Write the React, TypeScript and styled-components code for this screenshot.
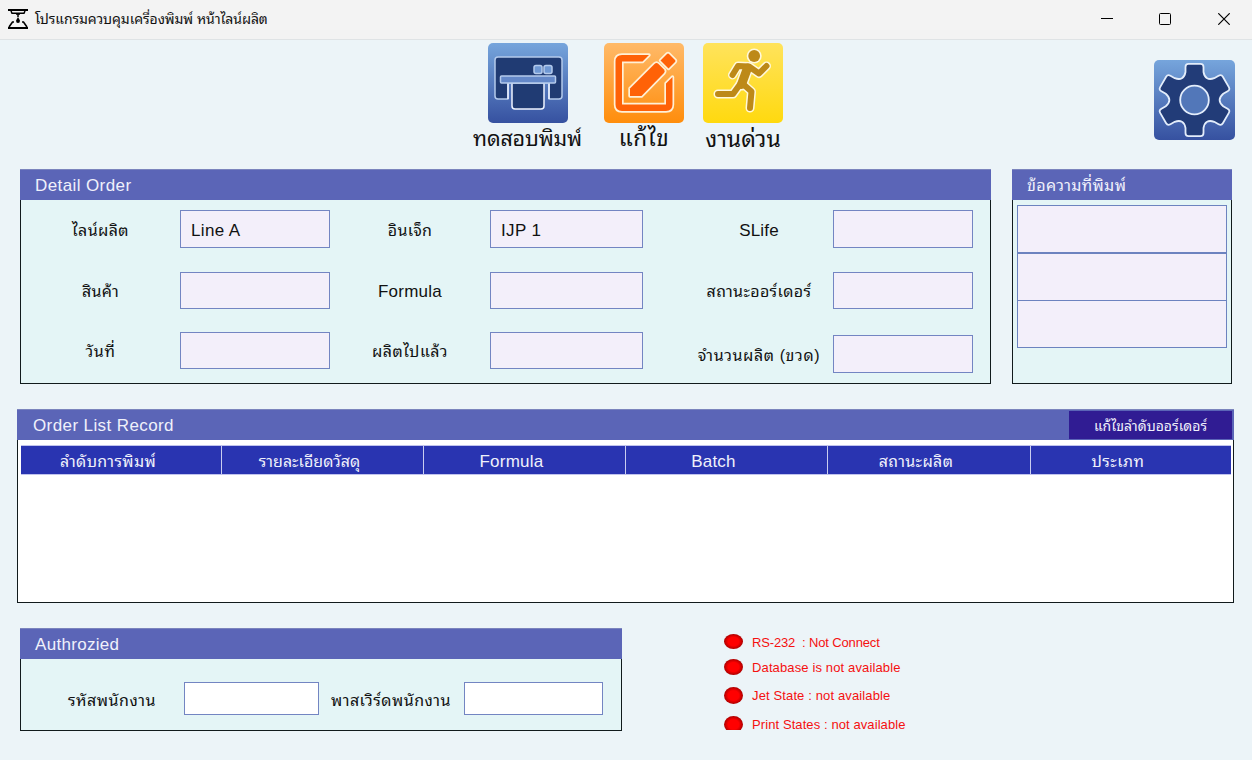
import React from "react";
import styled, { createGlobalStyle } from "styled-components";

const Global = createGlobalStyle`
  * { box-sizing: border-box; }
  body { margin: 0; background: #ecf4f8; font-family: "Liberation Sans", "Noto Sans Thai Looped", "Loma", "Noto Sans Thai", sans-serif; }
`;

const Window = styled.div`
  width: 1252px;
  height: 760px;
  background: #ecf4f8;
  overflow: hidden;
  display: flex;
  flex-direction: column;
`;

const TitleBar = styled.header`
  height: 40px;
  flex: none;
  background: #f3f3f3;
  border-bottom: 1px solid #dfe3e5;
  display: flex;
  align-items: center;
  justify-content: space-between;
  padding: 0 22px 2px 8px;
`;

const TitleGroup = styled.div`
  display: flex;
  align-items: center;
  gap: 7px;
`;

const Controls = styled.div`
  display: flex;
  align-items: center;
  gap: 46px;
  svg:last-child { margin-left: 1px; }
`;

const Text = styled.span<{ $size?: number; $track?: number; $color?: string }>`
  display: inline-block;
  white-space: pre;
  line-height: 20px;
  font-size: ${(p) => p.$size ?? 16}px;
  letter-spacing: ${(p) => p.$track ?? 0}px;
  color: ${(p) => p.$color ?? "#111"};
`;

const Toolbar = styled.nav`
  height: 129px;
  flex: none;
  display: flex;
  align-items: flex-start;
  padding: 3px 17px 0 473px;
`;

const Tool = styled.button<{ $width: number; $gap?: number }>`
  width: ${(p) => p.$width}px;
  margin-left: ${(p) => p.$gap ?? 0}px;
  padding: 0;
  border: 0;
  background: none;
  font-family: inherit;
  display: flex;
  flex-direction: column;
  align-items: center;
  gap: 6px;
  svg { display: block; flex: none; }
`;

const SettingsButton = styled.button`
  margin: 17px 0 0 auto;
  padding: 0;
  border: 0;
  background: none;
  svg { display: block; }
`;

const PanelRow = styled.div<{ $top?: number }>`
  display: flex;
  margin: ${(p) => p.$top ?? 0}px 20px 0;
`;

const Panel = styled.section<{ $width: number; $height: number; $left?: number; $bg?: string }>`
  width: ${(p) => p.$width}px;
  height: ${(p) => p.$height}px;
  margin-left: ${(p) => p.$left ?? 0}px;
  flex: none;
  display: flex;
  flex-direction: column;
  background: ${(p) => p.$bg ?? "#e4f5f6"};
`;

const PanelHeader = styled.h2<{ $indent?: number }>`
  margin: 0;
  height: 31px;
  flex: none;
  padding: 1px 2px 0 ${(p) => p.$indent ?? 15}px;
  background: #5b65b7;
  border-top: 1px solid #7b84bd;
  font-weight: 400;
  display: flex;
  align-items: center;
  justify-content: space-between;
`;

const PanelBody = styled.div<{ $pad?: string }>`
  flex: 1;
  min-height: 0;
  border: 1px solid #111a1c;
  border-top: 0;
  display: flex;
  padding: ${(p) => p.$pad ?? "0"};
`;

const FieldColumn = styled.div<{ $width: number; $left?: number }>`
  width: ${(p) => p.$width}px;
  margin-left: ${(p) => p.$left ?? 0}px;
  padding-top: 10px;
  display: flex;
  flex-direction: column;
`;

const Field = styled.label<{ $gap?: number }>`
  display: flex;
  align-items: center;
  margin-top: ${(p) => p.$gap ?? 0}px;
`;

const FieldLabel = styled.span`
  flex: 1;
  display: flex;
  justify-content: center;
  padding-top: 3px;
`;

const Box = styled.span<{ $width: number; $height?: number; $fill?: string }>`
  width: ${(p) => p.$width}px;
  height: ${(p) => p.$height ?? 38}px;
  flex: none;
  border: 1px solid #7385c2;
  background: ${(p) => p.$fill ?? "#f3effa"};
  display: flex;
  align-items: center;
  padding: 3px 0 0 10px;
`;

const MessageList = styled.div`
  flex: 1;
  display: flex;
  flex-direction: column;
`;

const MessageRow = styled.div`
  height: 48px;
  border: 1px solid #6c83bf;
  background: #f3effa;
  & + & { margin-top: -0.5px; }
`;

const EditOrderButton = styled.button`
  width: 163px;
  height: 28px;
  margin-bottom: 2px;
  border: 0;
  padding: 2px 0 0;
  background: #301c93;
  font-family: inherit;
`;

const TableHead = styled.div`
  width: 1210px;
  height: 30px;
  display: grid;
  grid-template-columns: 200px 202px 202px 202px 203px 201px;
  background: #2934b1;
  border-top: 1px solid #c0c3ed;
  border-bottom: 1px solid #c0c3ed;
`;

const HeadCell = styled.div`
  display: flex;
  align-items: center;
  justify-content: center;
  padding: 3px 26px 0 0;
  & + & { border-left: 1px solid #c9cdf0; }
`;

const CredentialRow = styled.div`
  display: flex;
  height: 33px;
  align-items: center;
`;

const CredentialLabel = styled.span<{ $width: number; $pad: number }>`
  width: ${(p) => p.$width}px;
  padding: 4px 0 0 ${(p) => p.$pad}px;
  display: flex;
`;

const StatusList = styled.ul`
  list-style: none;
  margin: 0 0 0 102px;
  padding: 6px 0 0;
  display: flex;
  flex-direction: column;
`;

const StatusItem = styled.li<{ $height: number }>`
  height: ${(p) => p.$height}px;
  flex: none;
  display: flex;
  align-items: flex-start;
  gap: 9px;
  ${Text} { line-height: 17px; }
`;

const Lamp = styled.i<{ $size: number; $cut?: number }>`
  width: 19px;
  height: ${(p) => p.$size}px;
  flex: none;
  border-radius: 50%;
  background: radial-gradient(ellipse at center, #ff0000 40%, #a80000 72%);
  clip-path: inset(0 0 ${(p) => p.$cut ?? 0}px 0);
`;

const PrinterMark = () => (
  <svg width="20" height="20" viewBox="0 0 20 20" fill="none" stroke="#000" strokeWidth="2">
    <path d="M0 1H20" />
    <path d="M3 2L4 4.2H16L17 2" strokeWidth="1.5" />
    <path d="M8 5H12M10 5V8" strokeWidth="1.5" />
    <path d="M10 8L12 11.5Q12 14 10 14T8 11.5Z" fill="#000" stroke="none" />
    <path d="M6 13H4.5L1 18M19 18L15.5 13H14" strokeWidth="1.6" />
    <path d="M0 19H20" />
  </svg>
);

const TestPrintIcon = () => (
  <svg width="80" height="80" viewBox="0 0 80 80">
    <defs>
      <linearGradient id="blue" x2="0" y2="1">
        <stop stopColor="#76a5dc" />
        <stop offset="1" stopColor="#3651a0" />
      </linearGradient>
    </defs>
    <rect width="80" height="80" rx="5" fill="url(#blue)" />
    <g stroke="#b4caec" strokeWidth="1.5" strokeLinejoin="round">
      <path d="M10 14H71Q74 14 74 17V53Q74 56 71 56H61V40H20V56H10Q7 56 7 53V17Q7 14 10 14Z" fill="#203b73" />
      <path d="M24 40H56V63Q56 66 53 66H27Q24 66 24 63Z" fill="#203b73" stroke="#eef4ff" />
      <path d="M20 56V40M61 56V40" stroke="#eef4ff" />
      <rect x="12.5" y="33" width="55" height="7" rx="1" fill="#6488c9" />
      <rect x="46" y="22.500" width="8" height="8" rx="2" fill="#6f98d4" />
      <rect x="56" y="22.500" width="8" height="8" rx="2" fill="#6f98d4" />
    </g>
  </svg>
);

const EditIcon = () => (
  <svg width="80" height="80" viewBox="0 0 80 80">
    <defs>
      <linearGradient id="orange" x2="0" y2="1">
        <stop stopColor="#ffba69" />
        <stop offset="1" stopColor="#ff8d0c" />
      </linearGradient>
    </defs>
    <rect width="80" height="80" rx="5" fill="url(#orange)" />
    <g fill="#ff6207" stroke="#fff0d6" strokeWidth="3.4" strokeLinejoin="round" paintOrder="stroke">
      <path d="M45 12H18Q11.500 12 11.500 18.500V61.500Q11.500 68 18 68H62Q68.500 68 68.500 61.500V34L62 40.500V61.500H18V18.500H38.500Z" />
      <path d="M26 45.500L50.500 21Q52.500 19 54.500 21L60 26.500Q61.500 28 60 30L37.500 53H26Z" />
      <path d="M56.500 17.500L63 11Q64 10 65 11L71 17Q72 18 71 19L64.500 25.500Z" />
    </g>
  </svg>
);

const runner = (
  <>
    <path d="M29.500 32L35 23L46 23.500L56 30.500L63.500 23" />
    <path d="M36.500 42L30 51H15" />
    <path d="M40 41L48.500 48.500L47 65" />
  </>
);

const RushIcon = () => (
  <svg width="80" height="80" viewBox="0 0 80 80">
    <defs>
      <linearGradient id="yellow" x2="0" y2="1">
        <stop stopColor="#ffe35c" />
        <stop offset="1" stopColor="#ffd90f" />
      </linearGradient>
    </defs>
    <rect width="80" height="80" rx="5" fill="url(#yellow)" />
    <g fill="none" stroke="#fff8dc" strokeWidth="9" strokeLinecap="round" strokeLinejoin="round">
      {runner}
      <path d="M44.500 25L38.500 41.500" strokeWidth="12" />
    </g>
    <circle cx="51.200" cy="13" r="7.500" fill="#fff8dc" />
    <g fill="none" stroke="#bd8918" strokeWidth="6" strokeLinecap="round" strokeLinejoin="round">
      {runner}
      <path d="M44.500 25L38.500 41.500" strokeWidth="9" />
    </g>
    <circle cx="51.200" cy="13" r="5.900" fill="#bd8918" />
  </svg>
);

function gearPath(cx: number, cy: number) {
  const parts: string[] = [];
  for (let i = 0; i < 6; i++) {
    const a = (Math.PI / 3) * i - Math.PI / 2;
    const at = (r: number, t: number) =>
      `${(cx + r * Math.cos(a) - t * Math.sin(a)).toFixed(2)} ${(cy + r * Math.sin(a) + t * Math.cos(a)).toFixed(2)}`;
    const valley = a + Math.PI / 6;
    parts.push(
      `${i === 0 ? "M" : ""}${at(28, -9)}`,
      `L${at(33, -9)}Q${at(36.2, -9)} ${at(36.2, -6)}L${at(36.2, 6)}Q${at(36.2, 9)} ${at(33, 9)}L${at(28, 9)}`,
      `Q${(cx + 21.5 * Math.cos(valley)).toFixed(2)} ${(cy + 21.5 * Math.sin(valley)).toFixed(2)} `
    );
  }
  return parts.join("") + `${cx - 9} ${cy - 28}Z`;
}

const GearIcon = () => (
  <svg width="81" height="80" viewBox="0 0 81 80">
    <rect width="81" height="80" rx="5" fill="url(#blue)" />
    <path d={gearPath(40.5, 40)} fill="#223c78" stroke="#e3edfb" strokeWidth="1.8" />
    <circle cx="40.500" cy="40" r="14.300" fill="#5277b9" stroke="#e3edfb" strokeWidth="1.800" />
  </svg>
);

type Entry = { label: string; value?: string; gap?: number; height?: number; track?: number; size?: number };

const Fields = ({ items, width, left, box }: { items: Entry[]; width: number; left?: number; box: number }) => (
  <FieldColumn $width={width} $left={left}>
    {items.map((f) => (
      <Field key={f.label} $gap={f.gap}>
        <FieldLabel>
          <Text $size={f.size} $track={f.track}>{f.label}</Text>
        </FieldLabel>
        <Box $width={box} $height={f.height}>
          {f.value && <Text $size={17} $track={0.35}>{f.value}</Text>}
        </Box>
      </Field>
    ))}
  </FieldColumn>
);

const heads: Entry[] = [
  { label: "ลำดับการพิมพ์", track: 0.35 },
  { label: "รายละเอียดวัสดุ", track: 0.05 },
  { label: "Formula", size: 17, track: 0.25 },
  { label: "Batch", size: 17, track: 0.2 },
  { label: "สถานะผลิต", track: 0.35 },
  { label: "ประเภท", track: 0.5 },
];

const states = [
  { text: "RS-232  : Not Connect", height: 25, lamp: 15, track: -0.15 },
  { text: "Database is not available", height: 28, lamp: 16, track: 0.13 },
  { text: "Jet State : not available", height: 29, lamp: 17, track: 0.13 },
  { text: "Print States : not available", height: 20, lamp: 17, track: 0.09, cut: 3 },
];

export default function App() {
  return (
    <Window>
      <Global />
      <TitleBar>
        <TitleGroup>
          <PrinterMark />
          <Text $size={14} $track={-0.09}>โปรแกรมควบคุมเครื่องพิมพ์ หน้าไลน์ผลิต</Text>
        </TitleGroup>
        <Controls>
          <svg width="12" height="12" stroke="#000"><path d="M0 5.5H12" /></svg>
          <svg width="12" height="12" stroke="#000" fill="none"><rect x=".5" y=".5" width="11" height="11" rx="1" /></svg>
          <svg width="12" height="12" stroke="#000" strokeWidth="1.2"><path d="M.3.3L11.700 11.700M11.700.3L.3 11.700" /></svg>
        </Controls>
      </TitleBar>

      <Toolbar>
        <Tool $width={109}>
          <TestPrintIcon />
          <Text $size={21.5} $track={-0.2}>ทดสอบพิมพ์</Text>
        </Tool>
        <Tool $width={80} $gap={22}>
          <EditIcon />
          <Text $size={22.5} $track={0.6}>แก้ไข</Text>
        </Tool>
        <Tool $width={80} $gap={19}>
          <RushIcon />
          <Text $size={23}>งานด่วน</Text>
        </Tool>
        <SettingsButton>
          <GearIcon />
        </SettingsButton>
      </Toolbar>

      <PanelRow>
        <Panel $width={971} $height={215}>
          <PanelHeader>
            <Text $size={17} $track={0.4} $color="#f0f1fb">Detail Order</Text>
          </PanelHeader>
          <PanelBody>
            <Fields
              width={309}
              box={150}
              items={[
                { label: "ไลน์ผลิต", value: "Line A", track: 0.4 },
                { label: "สินค้า", gap: 24, height: 37, track: 0.3 },
                { label: "วันที่", gap: 23, height: 37, track: 0.6 },
              ]}
            />
            <Fields
              width={313}
              box={153}
              items={[
                { label: "อินเจ็ก", value: "IJP 1", track: 0.3 },
                { label: "Formula", gap: 24, height: 37, size: 17, track: 0.25 },
                { label: "ผลิตไปแล้ว", gap: 23, height: 37, track: 0.5 },
              ]}
            />
            <Fields
              width={288}
              left={42}
              box={140}
              items={[
                { label: "SLife", size: 17, track: 0.2 },
                { label: "สถานะออร์เดอร์", gap: 24, height: 37, track: 0.35 },
                { label: "จำนวนผลิต (ขวด)", gap: 26, track: 0.6 },
              ]}
            />
          </PanelBody>
        </Panel>
        <Panel $width={220} $height={215} $left={21}>
          <PanelHeader>
            <Text $track={0.35} $color="#f0f1fb">ข้อความที่พิมพ์</Text>
          </PanelHeader>
          <PanelBody $pad="5px 4px 0">
            <MessageList>
              <MessageRow />
              <MessageRow />
              <MessageRow />
            </MessageList>
          </PanelBody>
        </Panel>
      </PanelRow>

      <PanelRow $top={25}>
        <Panel $width={1217} $height={194} $left={-3} $bg="#fff">
          <PanelHeader $indent={16}>
            <Text $size={17} $track={0.4} $color="#f0f1fb">Order List Record</Text>
            <EditOrderButton>
              <Text $size={14} $color="#f0f1fb">แก้ไขลำดับออร์เดอร์</Text>
            </EditOrderButton>
          </PanelHeader>
          <PanelBody $pad="5px 2px 0 3px">
            <TableHead>
              {heads.map((h) => (
                <HeadCell key={h.label}>
                  <Text $size={h.size} $track={h.track} $color="#f0f1fb">{h.label}</Text>
                </HeadCell>
              ))}
            </TableHead>
          </PanelBody>
        </Panel>
      </PanelRow>

      <PanelRow $top={25}>
        <Panel $width={602} $height={103}>
          <PanelHeader>
            <Text $size={17} $track={0.3} $color="#f0f1fb">Authrozied</Text>
          </PanelHeader>
          <PanelBody $pad="23px 0 0">
            <CredentialRow>
              <CredentialLabel $width={163} $pad={47}>
                <Text $track={0.5}>รหัสพนักงาน</Text>
              </CredentialLabel>
              <Box $width={135} $height={33} $fill="#fff" />
              <CredentialLabel $width={145} $pad={12}>
                <Text $track={0.48}>พาสเวิร์ดพนักงาน</Text>
              </CredentialLabel>
              <Box $width={139} $height={33} $fill="#fff" />
            </CredentialRow>
          </PanelBody>
        </Panel>
        <StatusList>
          {states.map((s) => (
            <StatusItem key={s.text} $height={s.height}>
              <Lamp $size={s.lamp} $cut={s.cut} />
              <Text $size={13} $track={s.track} $color="#f51010">{s.text}</Text>
            </StatusItem>
          ))}
        </StatusList>
      </PanelRow>
    </Window>
  );
}
